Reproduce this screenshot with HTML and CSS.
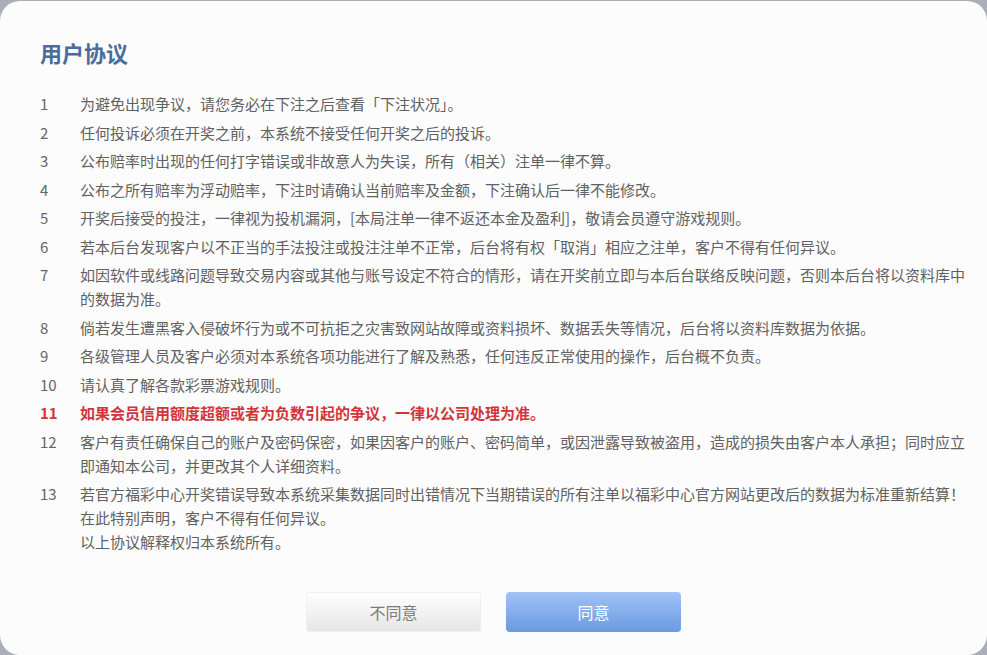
FILE: index.html
```html
<!DOCTYPE html>
<html lang="zh-CN">
<head>
<meta charset="utf-8">
<title>用户协议</title>
<link rel="stylesheet" href="styles.css">
</head>
<body>
<div class="dialog">
  <h1 class="title">用户协议</h1>
  <div class="terms">
    <div class="item"><span class="num">1</span><span class="txt">为避免出现争议，请您务必在下注之后查看「下注状况」。</span></div>
    <div class="item"><span class="num">2</span><span class="txt">任何投诉必须在开奖之前，本系统不接受任何开奖之后的投诉。</span></div>
    <div class="item"><span class="num">3</span><span class="txt">公布赔率时出现的任何打字错误或非故意人为失误，所有（相关）注单一律不算。</span></div>
    <div class="item"><span class="num">4</span><span class="txt">公布之所有赔率为浮动赔率，下注时请确认当前赔率及金额，下注确认后一律不能修改。</span></div>
    <div class="item"><span class="num">5</span><span class="txt">开奖后接受的投注，一律视为投机漏洞，[本局注单一律不返还本金及盈利]，敬请会员遵守游戏规则。</span></div>
    <div class="item"><span class="num">6</span><span class="txt">若本后台发现客户以不正当的手法投注或投注注单不正常，后台将有权「取消」相应之注单，客户不得有任何异议。</span></div>
    <div class="item"><span class="num">7</span><span class="txt">如因软件或线路问题导致交易内容或其他与账号设定不符合的情形，请在开奖前立即与本后台联络反映问题，否则本后台将以资料库中的数据为准。</span></div>
    <div class="item"><span class="num">8</span><span class="txt">倘若发生遭黑客入侵破坏行为或不可抗拒之灾害致网站故障或资料损坏、数据丢失等情况，后台将以资料库数据为依据。</span></div>
    <div class="item"><span class="num">9</span><span class="txt">各级管理人员及客户必须对本系统各项功能进行了解及熟悉，任何违反正常使用的操作，后台概不负责。</span></div>
    <div class="item"><span class="num">10</span><span class="txt">请认真了解各款彩票游戏规则。</span></div>
    <div class="item item-warn"><span class="num">11</span><span class="txt">如果会员信用额度超额或者为负数引起的争议，一律以公司处理为准。</span></div>
    <div class="item"><span class="num">12</span><span class="txt">客户有责任确保自己的账户及密码保密，如果因客户的账户、密码简单，或因泄露导致被盗用，造成的损失由客户本人承担；同时应立即通知本公司，并更改其个人详细资料。</span></div>
    <div class="item"><span class="num">13</span><span class="txt">若官方福彩中心开奖错误导致本系统采集数据同时出错情况下当期错误的所有注单以福彩中心官方网站更改后的数据为标准重新结算！<br>在此特别声明，客户不得有任何异议。<br>以上协议解释权归本系统所有。</span></div>
  </div>
  <div class="actions">
    <button class="btn btn-cancel" type="button">不同意</button>
    <button class="btn btn-ok" type="button">同意</button>
  </div>
</div>
</body>
</html>
```

FILE: styles.css
```css
html, body {
  margin: 0;
  padding: 0;
  height: 100%;
}

body {
  background: #a9aeb9;
  font-family: "Noto Sans CJK SC", "Noto Sans", sans-serif;
  overflow: hidden;
}

.dialog {
  box-sizing: border-box;
  margin-top: 1px;
  height: 654px;
  width: 987px;
  background: #fcfcfc;
  border-radius: 20px;
  padding: 36px 20px 23px 20px;
  display: flex;
  flex-direction: column;
}

.title {
  margin: 0 0 25px 20px;
  font-size: 22px;
  line-height: 30px;
  font-weight: 700;
  color: #4b6b9c;
}

.terms {
  padding-left: 20px;
  font-size: 15px;
  line-height: 24px;
  color: #616161;
}

.item {
  display: flex;
  margin-bottom: 4.5px;
}

.num {
  flex: 0 0 40px;
  color: #666;
}

.txt {
  flex: 1;
}

.item-warn {
  color: #d3333b;
  font-weight: 700;
}

.item-warn .num {
  color: #d3333b;
}

.actions {
  margin-top: auto;
  display: flex;
  justify-content: center;
  gap: 25px;
}

.btn {
  width: 175px;
  height: 40px;
  border: none;
  border-radius: 4px;
  font-family: "Noto Sans CJK SC", "Noto Sans", sans-serif;
  font-size: 16px;
  cursor: pointer;
}

.btn-cancel {
  background: linear-gradient(#ffffff, #e5e5e5);
  color: #7a7a7a;
  box-shadow: 0 0 0 1px #f0f0f0 inset;
}

.btn-ok {
  background: linear-gradient(#a0c2f7, #6a9ae0);
  color: #ffffff;
}
```
